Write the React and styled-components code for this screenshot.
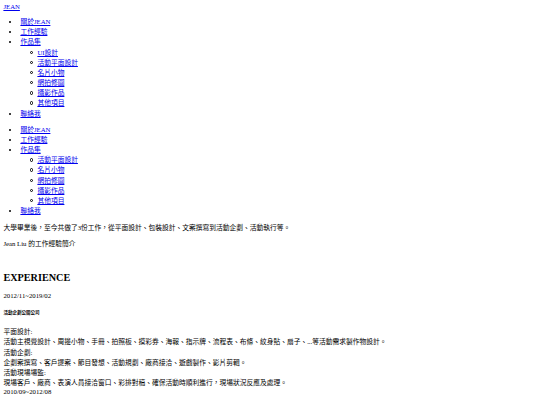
import React from "react";
import styled, { createGlobalStyle } from "styled-components";

const GlobalStyle = createGlobalStyle`
  body {
    margin: 3.4px;
    font-family: "Liberation Serif", "Noto Sans CJK TC", serif;
    font-size: 6.75px;
    line-height: 1.51;
    color: #000;
    background: #fff;
  }
`;

const Link = styled.a`
  color: #0000ee;
  text-decoration: underline;
  cursor: pointer;
`;

const Brand = styled.div`
  line-height: 1.15;
`;

const Menu = styled.ul`
  list-style-type: disc;
  margin: 5.8px 0;
  padding-left: 17px;
`;

const SubMenu = styled.ul`
  list-style: none;
  margin: 0;
  padding-left: 17px;
`;

const SubItem = styled.li`
  &::before {
    content: "";
    display: inline-block;
    box-sizing: border-box;
    width: 3.4px;
    height: 3.4px;
    border: 0.8px solid #000;
    border-radius: 50%;
    margin-left: -7.6px;
    margin-right: 4.2px;
    vertical-align: 0.6px;
  }
`;

const Text = styled.p`
  margin: ${(p) => (p.$first ? "7.2px 0 5.8px" : "5.8px 0")};
  line-height: ${(p) => (p.$latin ? 1.15 : 1.51)};
`;

const Title = styled.h1`
  font-size: 10.2px;
  font-weight: bold;
  line-height: 1.15;
  margin: 22px 0 8.2px;
`;

const Company = styled.h6`
  font-size: 0.67em;
  font-weight: bold;
  margin: 2.33em 0;
`;

const Detail = styled.div`
  margin: 0;
  line-height: ${(p) => (p.$latin ? 1.15 : 1.51)};
`;

const works = ["UI設計", "活動平面設計", "名片小物", "網拍修圖", "攝影作品", "其他項目"];

const Nav = ({ items }) => (
  <Menu>
    <li>
      <Link>關於JEAN</Link>
    </li>
    <li>
      <Link>工作經驗</Link>
    </li>
    <li>
      <Link>作品集</Link>
      <SubMenu>
        {items.map((w) => (
          <SubItem key={w}>
            <Link>{w}</Link>
          </SubItem>
        ))}
      </SubMenu>
    </li>
    <li>
      <Link>聯絡我</Link>
    </li>
  </Menu>
);

export default function App() {
  return (
    <>
      <GlobalStyle />
      <Brand>
        <Link>JEAN</Link>
      </Brand>
      <Nav items={works} />
      <Nav items={works.slice(1)} />
      <Text $first>大學畢業後，至今共做了3份工作，從平面設計、包裝設計、文案撰寫到活動企劃、活動執行等。</Text>
      <Text>Jean Liu 的工作經驗簡介</Text>
      <Title>EXPERIENCE</Title>
      <Text $latin>2012/11~2019/02</Text>
      <Company>活動企劃公關公司</Company>
      <Detail>
        平面設計:
        <br />
        活動主視覺設計、周邊小物、手冊、拍照板、摸彩券、海報、指示牌、流程表、布條、紋身貼、扇子、...等活動需求製作物設計。
        <br />
        活動企劃:
        <br />
        企劃案撰寫、客戶提案、節目發想、活動規劃、廠商接洽、遊戲製作、影片剪輯。
        <br />
        活動現場場監:
        <br />
        現場客戶、廠商、表演人員接洽窗口、彩排對稿、確保活動時順利進行，現場狀況反應及處理。
      </Detail>
      <Detail $latin>2010/09~2012/08</Detail>
    </>
  );
}
